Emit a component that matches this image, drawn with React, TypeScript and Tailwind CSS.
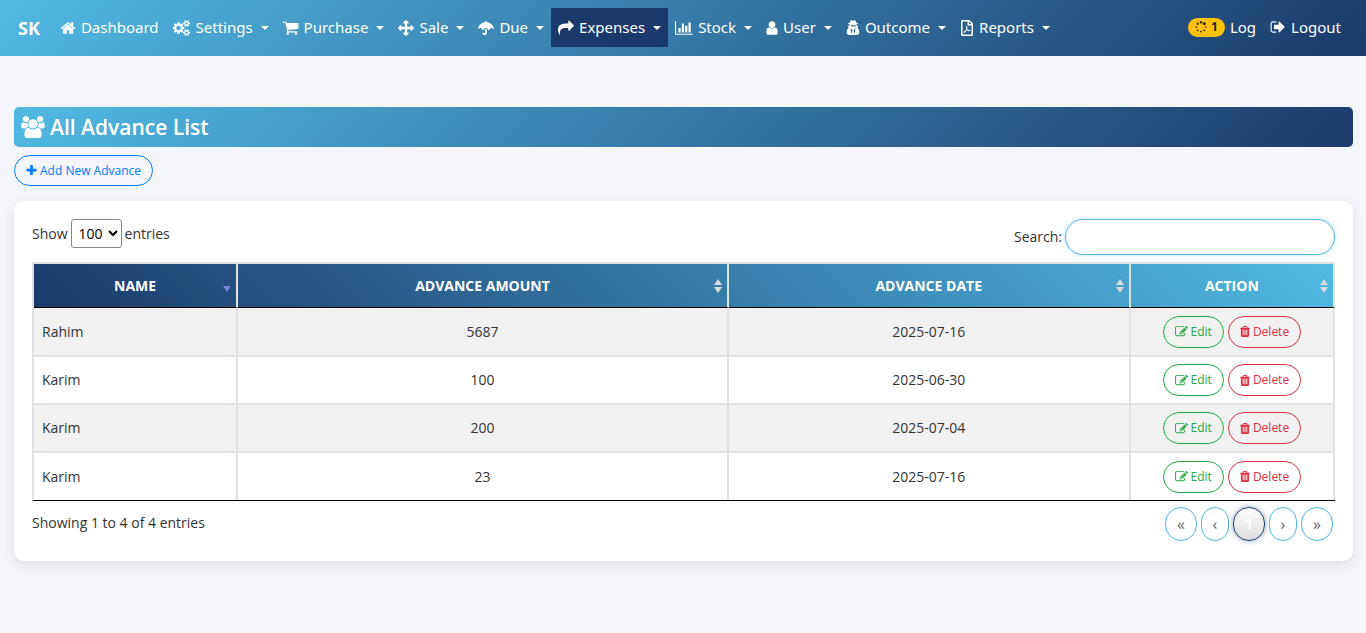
import type { ReactNode } from "react";
import { FaRegFilePdf, FaUmbrella } from "react-icons/fa";

interface GlyphProps {
  viewBox: string;
  d: string;
  className?: string;
}

function Glyph({ viewBox, d, className }: GlyphProps) {
  return (
    <svg className={className} viewBox={viewBox} fill="currentColor" aria-hidden="true">
      <path d={d} />
    </svg>
  );
}

const glyphs = {
  home: "M1472 992v480q0 26-19 45t-45 19h-384v-384h-256v384h-384q-26 0-45-19t-19-45v-480q0-1 .5-3t.5-3l575-474 575 474q1 2 1 6zm223-69l-62 74q-8 9-21 11h-3q-13 0-21-7l-692-577-692 577q-12 8-24 7-13-2-21-11l-62-74q-8-10-7-23.5t11-21.5l719-599q32-26 76-26t76 26l244 204v-195q0-14 9-23t23-9h192q14 0 23 9t9 23v408l219 182q10 8 11 21.5t-7 23.5z",
  cogs: "M832 896q0-106-75-181t-181-75-181 75-75 181 75 181 181 75 181-75 75-181zm768 512q0-52-38-90t-90-38-90 38-38 90q0 53 37.5 90.5t90.5 37.5 90.5-37.5 37.5-90.5zm0-1024q0-52-38-90t-90-38-90 38-38 90q0 53 37.5 90.5t90.5 37.5 90.5-37.5 37.5-90.5zm-384 421v185q0 10-7 19.5t-16 10.5l-155 24q-11 35-32 76 34 48 90 115 7 11 7 20 0 12-7 19-23 30-82.5 89.5t-78.5 59.5q-11 0-21-7l-115-90q-37 19-77 31-11 108-23 155-7 24-30 24h-186q-11 0-20-7.5t-10-17.5l-23-153q-34-10-75-31l-118 89q-7 7-20 7-11 0-21-8-144-133-144-160 0-9 7-19 10-14 41-53t47-61q-23-44-35-82l-152-24q-10-1-17-9.5t-7-19.5v-185q0-10 7-19.5t16-10.5l155-24q11-35 32-76-34-48-90-115-7-11-7-20 0-12 7-20 22-30 82-89t79-59q11 0 21 7l115 90q34-18 77-32 11-108 23-154 7-24 30-24h186q11 0 20 7.5t10 17.5l23 153q34 10 75 31l118-89q8-7 20-7 11 0 21 8 144 133 144 160 0 8-7 19-12 16-42 54t-45 60q23 48 34 82l152 23q10 2 17 10.5t7 19.5zm640 533v140q0 16-149 31-12 27-30 52 51 113 51 138 0 4-4 7-122 71-124 71-8 0-46-47t-52-68q-20 2-30 2t-30-2q-14 21-52 68t-46 47q-2 0-124-71-4-3-4-7 0-25 51-138-18-25-30-52-149-15-149-31v-140q0-16 149-31 13-29 30-52-51-113-51-138 0-4 4-7 4-2 35-20t59-34 30-16q8 0 46 46.5t52 67.5q20-2 30-2t30 2q51-71 92-112l6-2q4 0 124 70 4 3 4 7 0 25-51 138 17 23 30 52 149 15 149 31zm0-1024v140q0 16-149 31-12 27-30 52 51 113 51 138 0 4-4 7-122 71-124 71-8 0-46-47t-52-68q-20 2-30 2t-30-2q-14 21-52 68t-46 47q-2 0-124-71-4-3-4-7 0-25 51-138-18-25-30-52-149-15-149-31v-140q0-16 149-31 13-29 30-52-51-113-51-138 0-4 4-7 4-2 35-20t59-34 30-16q8 0 46 46.5t52 67.5q20-2 30-2t30 2q51-71 92-112l6-2q4 0 124 70 4 3 4 7 0 25-51 138 17 23 30 52 149 15 149 31z",
  cart: "M704 1536q0 52-38 90t-90 38-90-38-38-90 38-90 90-38 90 38 38 90zm896 0q0 52-38 90t-90 38-90-38-38-90 38-90 90-38 90 38 38 90zm128-1088v512q0 24-16.5 42.5t-40.5 21.5l-1044 122q13 60 13 70 0 16-24 64h920q26 0 45 19t19 45-19 45-45 19h-1024q-26 0-45-19t-19-45q0-11 8-31.5t16-36 21.5-40 15.5-29.5l-177-823h-204q-26 0-45-19t-19-45 19-45 45-19h256q16 0 28.5 6.5t19.5 15.5 13 24.5 8 26 5.5 29.5 4.5 26h1201q26 0 45 19t19 45z",
  arrows: "M1792 896q0 26-19 45l-256 256q-19 19-45 19t-45-19-19-45v-128h-384v384h128q26 0 45 19t19 45-19 45l-256 256q-19 19-45 19t-45-19l-256-256q-19-19-19-45t19-45 45-19h128v-384h-384v128q0 26-19 45t-45 19-45-19l-256-256q-19-19-19-45t19-45l256-256q19-19 45-19t45 19 19 45v128h384v-384h-128q-26 0-45-19t-19-45 19-45l256-256q19-19 45-19t45 19l256 256q19 19 19 45t-19 45-45 19h-128v384h384v-128q0-26 19-45t45-19 45 19l256 256q19 19 19 45z",
  share: "M1792 640q0 26-19 45l-512 512q-19 19-45 19t-45-19-19-45v-256h-224q-98 0-175.5 6t-154 21.5-133 42.5-105.5 69.5-80 101-48.5 138.5-17.5 181q0 55 5 123 0 6 2.5 23.5t2.5 26.5q0 15-8.5 25t-23.5 10q-16 0-28-17-7-9-13-22t-13.5-30-10.5-24q-127-285-127-451 0-199 53-333 162-403 875-403h224v-256q0-26 19-45t45-19 45 19l512 512q19 19 19 45z",
  chart: "M640 896v512h-256v-512h256zm384-512v1024h-256v-1024h256zm1024 1152v128h-2048v-1536h128v1408h1920zm-640-896v768h-256v-768h256zm384-384v1152h-256v-1152h256z",
  user: "M1536 1399q0 109-62.5 187t-150.5 78h-854q-88 0-150.5-78t-62.5-187q0-85 8.5-160.5t31.5-152 58.5-131 94-89 134.5-34.5q131 128 313 128t313-128q76 0 134.5 34.5t94 89 58.5 131 31.5 152 8.5 160.5zm-256-887q0 159-112.5 271.5t-271.5 112.5-271.5-112.5-112.5-271.5 112.5-271.5 271.5-112.5 271.5 112.5 112.5 271.5z",
  secret: "M736 1600l96-448-96-128-128-64zm320 0l128-640-128 64-96 128zm160-1010q-2-4-4-6-10-8-96-8-70 0-167 19-7 2-21 2t-21-2q-97-19-167-19-86 0-96 8-2 2-4 6 2 18 4 27 2 3 7.5 6.5t7.5 10.5q2 4 7.5 20.5t7 20.5 7.5 17 8.5 17 9 14 12 13.5 14 9.5 17.5 8 20.5 4 24.5 2q36 0 59-12.5t32.5-30 14.5-34.5 11.5-29.5 17.5-12.5h12q11 0 17.5 12.5t11.5 29.5 14.5 34.5 32.5 30 59 12.5q13 0 24.5-2t20.5-4 17.5-8 14-9.5 12-13.5 9-14 8.5-17 7.5-17 7-20.5 7.5-20.5q2-7 7.5-10.5t7.5-6.5q2-9 4-27zm384 827q0 121-73 190t-194 69h-874q-121 0-194-69t-73-190q0-61 4.5-118t19-125.5 37.5-123.5 63.5-103.5 93.5-74.5l-90-220h214q-22-64-22-128 0-12 2-32-194-40-194-96 0-57 210-99 17-62 51.5-134t70.5-114q32-37 76-37 30 0 84 31t84 31 84-31 84-31q44 0 76 37 36 42 70.5 114t51.5 134q210 42 210 99 0 56-194 96 7 81-20 160h214l-82 225q63 33 107.5 96.5t65.5 143.5 29 151.5 8 157.5z",
  spinner: "M526 1394q0 53-37.5 90.5t-90.5 37.5q-52 0-90-38t-38-90q0-53 37.5-90.5t90.5-37.5 90.5 37.5 37.5 90.5zm498 206q0 53-37.5 90.5t-90.5 37.5-90.5-37.5-37.5-90.5 37.5-90.5 90.5-37.5 90.5 37.5 37.5 90.5zm-704-704q0 53-37.5 90.5t-90.5 37.5-90.5-37.5-37.5-90.5 37.5-90.5 90.5-37.5 90.5 37.5 37.5 90.5zm1202 498q0 52-38 90t-90 38q-53 0-90.5-37.5t-37.5-90.5 37.5-90.5 90.5-37.5 90.5 37.5 37.5 90.5zm-964-996q0 66-47 113t-113 47-113-47-47-113 47-113 113-47 113 47 47 113zm1170 498q0 53-37.5 90.5t-90.5 37.5-90.5-37.5-37.5-90.5 37.5-90.5 90.5-37.5 90.5 37.5 37.5 90.5zm-640-704q0 80-56 136t-136 56-136-56-56-136 56-136 136-56 136 56 56 136zm530 206q0 93-66 158.5t-158 65.5q-93 0-158.5-65.5t-65.5-158.5q0-92 65.5-158t158.5-66q92 0 158 66t66 158z",
  signOut: "M704 1440q0 4 1 20t.5 26.5-3 23.5-10 19.5-20.5 6.5h-320q-119 0-203.5-84.5t-84.5-203.5v-704q0-119 84.5-203.5t203.5-84.5h320q13 0 22.5 9.5t9.5 22.5q0 4 1 20t.5 26.5-3 23.5-10 19.5-20.5 6.5h-320q-66 0-113 47t-47 113v704q0 66 47 113t113 47h312l11.5 1 11.5 3 8 5.5 7 9 2 13.5zm928-544q0 26-19 45l-544 544q-19 19-45 19t-45-19-19-45v-288h-448q-26 0-45-19t-19-45v-384q0-26 19-45t45-19h448v-288q0-26 19-45t45-19 45 19l544 544q19 19 19 45z",
  users: "M593 896q-162 5-265 128h-134q-82 0-138-40.5t-56-118.5q0-353 124-353 6 0 43.5 21t97.5 42.5 119 21.5q67 0 133-23-5 37-5 66 0 139 81 256zm1071 637q0 120-73 189.5t-194 69.5h-874q-121 0-194-69.5t-73-189.5q0-53 3.5-103.5t14-109 26.5-108.5 43-97.5 62-81 85.5-53.5 111.5-20q10 0 43 21.5t73 48 107 48 135 21.5 135-21.5 107-48 73-48 43-21.5q61 0 111.5 20t85.5 53.5 62 81 43 97.5 26.5 108.5 14 109 3.5 103.5zm-1024-1277q0 106-75 181t-181 75-181-75-75-181 75-181 181-75 181 75 75 181zm704 384q0 159-112.5 271.5t-271.5 112.5-271.5-112.5-112.5-271.5 112.5-271.5 271.5-112.5 271.5 112.5 112.5 271.5zm576 225q0 78-56 118.5t-138 40.5h-134q-103-123-265-128 81-117 81-256 0-29-5-66 66 23 133 23 59 0 119-21.5t97.5-42.5 43.5-21q124 0 124 353zm-128-609q0 106-75 181t-181 75-181-75-75-181 75-181 181-75 181 75 75 181z",
  plus: "M1600 736v192q0 40-28 68t-68 28h-416v416q0 40-28 68t-68 28h-192q-40 0-68-28t-28-68v-416h-416q-40 0-68-28t-28-68v-192q0-40 28-68t68-28h416v-416q0-40 28-68t68-28h192q40 0 68 28t28 68v416h416q40 0 68 28t28 68z",
  edit: "M888 1184l116-116-152-152-116 116v56h96v96h56zm440-720q-16-16-33 1l-350 350q-17 17-1 33t33-1l350-350q17-17 1-33zm80 594v190q0 119-84.5 203.5t-203.5 84.5h-832q-119 0-203.5-84.5t-84.5-203.5v-832q0-119 84.5-203.5t203.5-84.5h832q63 0 117 25 15 7 18 23 3 17-9 29l-49 49q-14 14-32 8-23-6-45-6h-832q-66 0-113 47t-47 113v832q0 66 47 113t113 47h832q66 0 113-47t47-113v-126q0-13 9-22l64-64q15-15 35-7t20 29zm-96-738l288 288-672 672h-288v-288zm444 132l-92 92-288-288 92-92q28-28 68-28t68 28l152 152q28 28 28 68t-28 68z",
  trash: "M704 1376v-704q0-14-9-23t-23-9h-64q-14 0-23 9t-9 23v704q0 14 9 23t23 9h64q14 0 23-9t9-23zm256 0v-704q0-14-9-23t-23-9h-64q-14 0-23 9t-9 23v704q0 14 9 23t23 9h64q14 0 23-9t9-23zm256 0v-704q0-14-9-23t-23-9h-64q-14 0-23 9t-9 23v704q0 14 9 23t23 9h64q14 0 23-9t9-23zm-544-992h448l-48-117q-7-9-17-11h-317q-10 2-17 11zm928 32v64q0 14-9 23t-23 9h-96v948q0 83-47 143.5t-113 60.5h-832q-66 0-113-58.5t-47-141.5v-952h-96q-14 0-23-9t-9-23v-64q0-14 9-23t23-9h309l70-167q15-37 54-63t79-26h320q40 0 79 26t54 63l70 167h309q14 0 23 9t9 23z",
};

interface NavItem {
  label: string;
  icon: ReactNode;
  menu?: boolean;
  active?: boolean;
}

const navItems: NavItem[] = [
  { label: "Dashboard", icon: <Glyph className="w-4 h-4" viewBox="0 0 1792 1792" d={glyphs.home} /> },
  { label: "Settings", menu: true, icon: <Glyph className="w-[18px] h-4" viewBox="0 0 1920 1792" d={glyphs.cogs} /> },
  { label: "Purchase", menu: true, icon: <Glyph className="w-4 h-4" viewBox="64 64 1728 1728" d={glyphs.cart} /> },
  { label: "Sale", menu: true, icon: <Glyph className="w-4 h-4" viewBox="0 0 1792 1792" d={glyphs.arrows} /> },
  { label: "Due", menu: true, icon: <FaUmbrella className="w-4 h-4" /> },
  { label: "Expenses", menu: true, active: true, icon: <Glyph className="w-4 h-4" viewBox="0 0 1792 1792" d={glyphs.share} /> },
  { label: "Stock", menu: true, icon: <Glyph className="w-[18px] h-4" viewBox="0 0 2048 1792" d={glyphs.chart} /> },
  { label: "User", menu: true, icon: <Glyph className="w-3 h-4" viewBox="256 0 1280 1792" d={glyphs.user} /> },
  { label: "Outcome", menu: true, icon: <Glyph className="w-[14px] h-4" viewBox="192 0 1408 1792" d={glyphs.secret} /> },
  { label: "Reports", menu: true, icon: <FaRegFilePdf className="w-[14px] h-4" /> },
];

const columns = [
  { label: "Name", width: "w-[15.7%]", sorted: true },
  { label: "Advance Amount", width: "w-[37.7%]" },
  { label: "Advance Date", width: "w-[30.9%]" },
  { label: "Action", width: "w-[15.7%]" },
];

const advances = [
  { name: "Rahim", amount: 5687, date: "2025-07-16" },
  { name: "Karim", amount: 100, date: "2025-06-30" },
  { name: "Karim", amount: 200, date: "2025-07-04" },
  { name: "Karim", amount: 23, date: "2025-07-16" },
];

const pages = [
  { text: "«", label: "First" },
  { text: "‹", label: "Previous", narrow: true },
  { text: "1", label: "Page 1", current: true },
  { text: "›", label: "Next", narrow: true },
  { text: "»", label: "Last" },
];

function SortIcon({ sorted }: { sorted?: boolean }) {
  return (
    <svg className="absolute right-[5px] top-[15px] w-2 h-[14px]" viewBox="0 0 8 14" aria-hidden="true">
      {sorted ? (
        <path d="M0 7h8L4 13z" fill="#7a82d8" />
      ) : (
        <>
          <path d="M0 6L4 0l4 6z" fill="#d5dbe0" />
          <path d="M0 8h8l-4 6z" fill="#d5dbe0" />
        </>
      )}
    </svg>
  );
}

function Navbar() {
  return (
    <nav className="flex items-center justify-between pt-2 pb-[9px] px-[18px] bg-[linear-gradient(135deg,#51b9e2,#1b3a6b)] text-white text-[15px]">
      <div className="flex items-center">
        <a href="#" className="mr-[13px] text-lg font-bold">SK</a>
        <ul className="flex items-center">
          {navItems.map((item) => (
            <li key={item.label}>
              <a
                href="#"
                className={`flex items-center h-[39px] px-[7px] gap-[5px] whitespace-nowrap ${item.active ? "bg-[#1b3a6b]" : ""}`}
              >
                {item.icon}
                {item.label}
                {item.menu && (
                  <svg className="w-2 h-1 ml-[3px]" viewBox="0 0 8 4" fill="currentColor" aria-hidden="true">
                    <path d="M0 0h8L4 4z" />
                  </svg>
                )}
              </a>
            </li>
          ))}
        </ul>
      </div>
      <ul className="flex items-center">
        <li>
          <a href="#" className="flex items-center gap-[5px] px-[7px]">
            <span className="flex items-center gap-1 h-[19px] px-[7px] rounded-full bg-[#ffc107] text-[#212529] text-xs font-bold">
              <Glyph className="w-3 h-3" viewBox="0 0 1792 1792" d={glyphs.spinner} />1
            </span>
            Log
          </a>
        </li>
        <li>
          <a href="#" className="flex items-center gap-[5px] px-[7px]">
            <Glyph className="w-4 h-4" viewBox="64 0 1664 1792" d={glyphs.signOut} />
            Logout
          </a>
        </li>
      </ul>
    </nav>
  );
}

function AdvanceTable() {
  return (
    <table className="w-full table-fixed border-separate border-spacing-0 border-t-2 border-l-2 border-b border-t-[#dee2e6] border-l-[#dee2e6] border-b-black">
      <thead>
        <tr className="bg-[linear-gradient(45deg,#1b3a6b,#51b9e2)] text-white">
          {columns.map((col) => (
            <th
              key={col.label}
              className={`${col.width} relative h-11 border-r-2 border-b border-r-[#dee2e6] border-b-black font-bold uppercase`}
            >
              {col.label}
              <SortIcon sorted={col.sorted} />
            </th>
          ))}
        </tr>
      </thead>
      <tbody className="[&>tr:first-child>td]:h-[49px] [&>tr:last-child>td]:h-[47px] [&>tr:last-child>td]:border-b-0">
        {advances.map((row, i) => (
          <tr key={i} className="odd:bg-[#f1f1f1] text-center">
            <td className="h-12 px-2 text-left border-r-2 border-b-2 border-[#dee2e6]">{row.name}</td>
            <td className="border-r-2 border-b-2 border-[#dee2e6]">{row.amount}</td>
            <td className="border-r-2 border-b-2 border-[#dee2e6]">{row.date}</td>
            <td className="border-r-2 border-b-2 border-[#dee2e6]">
              <div className="flex justify-center gap-1 text-xs">
                <button className="flex items-center gap-[3px] h-8 px-[11px] rounded-full border border-[#28a745] text-[#28a745]">
                  <Glyph className="w-[13px] h-[13px]" viewBox="0 0 1792 1792" d={glyphs.edit} />
                  Edit
                </button>
                <button className="flex items-center gap-[3px] h-8 px-[11px] rounded-full border border-[#dc3545] text-[#dc3545]">
                  <Glyph className="w-[10px] h-[13px]" viewBox="192 0 1408 1792" d={glyphs.trash} />
                  Delete
                </button>
              </div>
            </td>
          </tr>
        ))}
      </tbody>
    </table>
  );
}

export default function App() {
  return (
    <div className="min-h-screen bg-[#f4f6fb] font-['Noto_Sans',sans-serif] text-sm text-[#333]">
      <Navbar />
      <main className="pt-[51px] pl-[14px] pr-[13px] pb-12 font-['Open_Sans','Noto_Sans',sans-serif]">
        <h1 className="flex items-center gap-[5px] h-10 px-[7px] rounded-[5px] bg-[linear-gradient(135deg,#51b9e2,#1b3a6b)] text-white text-[21px] font-semibold">
          <Glyph className="w-6 h-[22px]" viewBox="0 0 1920 1792" d={glyphs.users} />
          All Advance List
        </h1>
        <button className="flex items-center gap-[3px] h-[31px] mt-2 px-[11px] rounded-full border border-[#007bff] text-[#007bff] text-xs">
          <Glyph className="w-[11px] h-[13px]" viewBox="128 0 1536 1792" d={glyphs.plus} />
          Add New Advance
        </button>

        <section className="mt-[15px] p-[18px] pb-5 rounded-[10px] bg-white shadow-[0_4px_12px_rgba(0,0,0,0.1)]">
          <div className="flex items-start justify-between mb-[7px]">
            <label className="flex items-center gap-[3px]">
              Show
              <select className="appearance-auto w-[51px] h-[29px] px-[3px] bg-white border border-[#888] rounded-[3px] text-black" defaultValue="100">
                <option>10</option>
                <option>25</option>
                <option>50</option>
                <option>100</option>
              </select>
              entries
            </label>
            <label className="flex items-center gap-[3px]">
              Search:
              <input
                type="search"
                className="w-[270px] h-9 px-4 rounded-full border border-[#51b9e2] bg-white outline-none shadow-[0_0_5px_rgba(81,185,226,0.4)]"
              />
            </label>
          </div>

          <AdvanceTable />

          <div className="flex items-start justify-between mt-[6px]">
            <p className="pt-[6px]">Showing 1 to 4 of 4 entries</p>
            <div className="flex gap-1 pr-[2px]">
              {pages.map((page) => (
                <button
                  key={page.text}
                  aria-label={page.label}
                  className={`h-[34px] rounded-full border ${page.narrow ? "w-7" : "w-8"} ${
                    page.current
                      ? "border-[#1b3a6b] text-white font-bold bg-[linear-gradient(#fff,#dcdcdc)] shadow-[0_0_5px_rgba(27,58,107,0.5)]"
                      : "border-[#51b9e2] text-[#666] text-base"
                  }`}
                >
                  {page.text}
                </button>
              ))}
            </div>
          </div>
        </section>
      </main>
    </div>
  );
}
